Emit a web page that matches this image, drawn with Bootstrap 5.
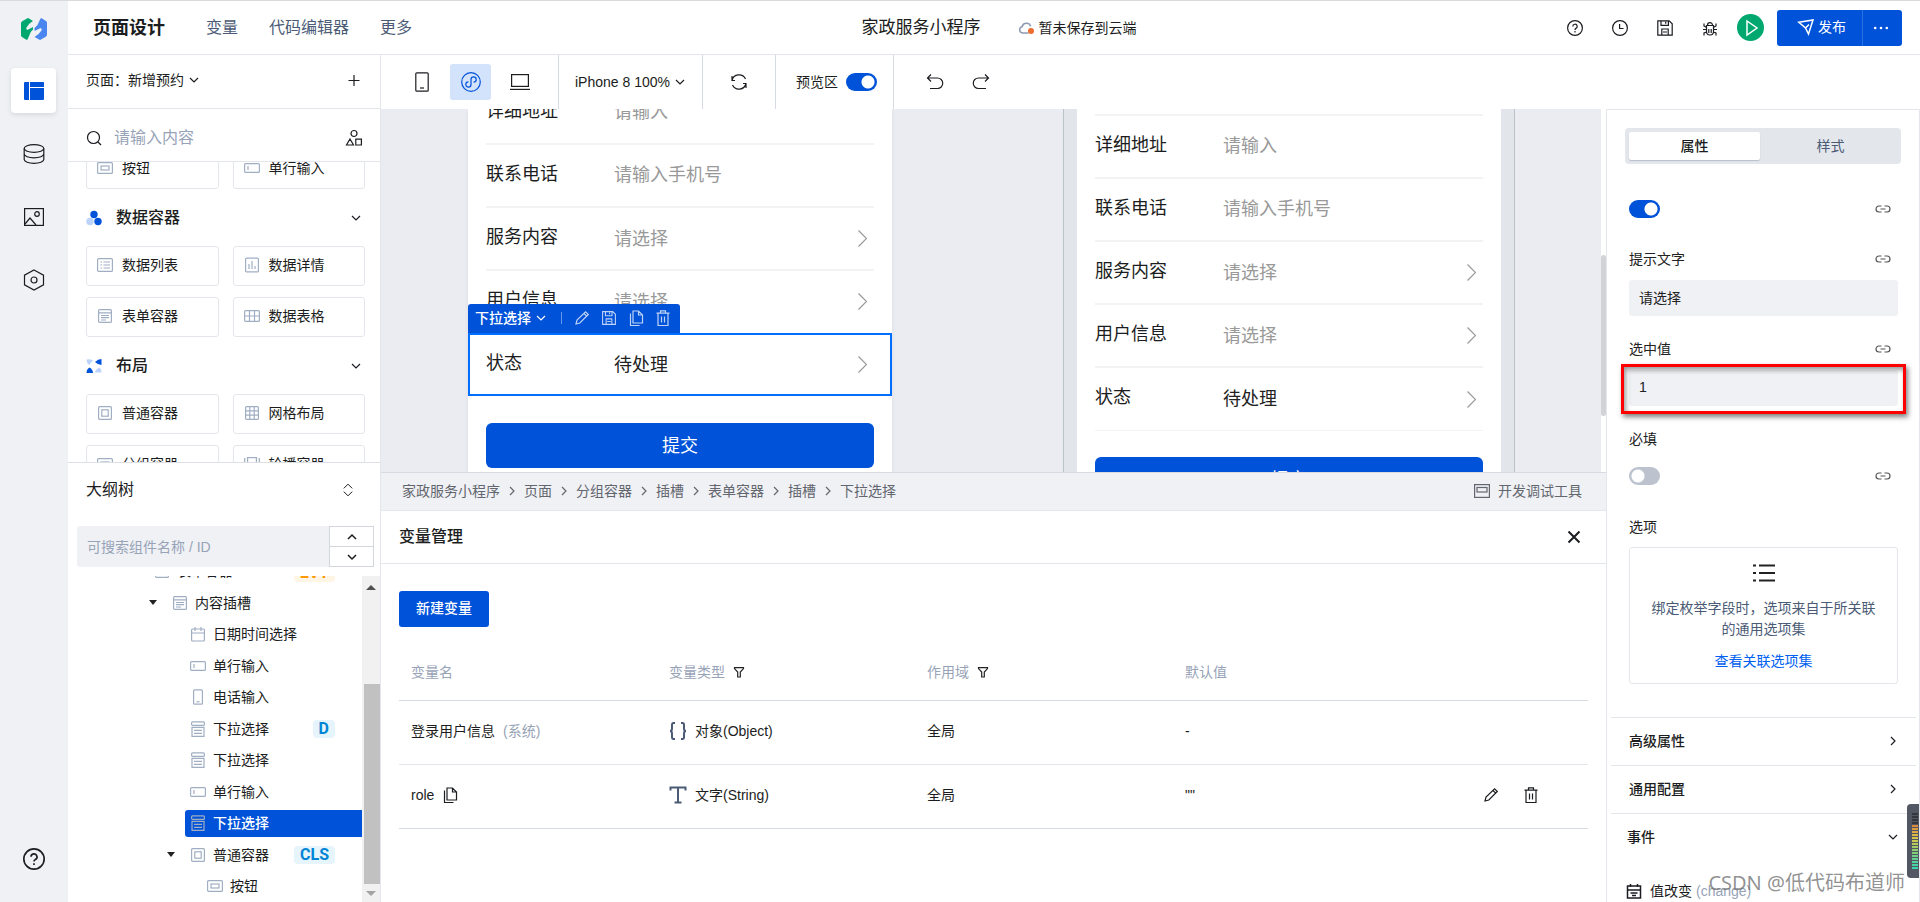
<!DOCTYPE html>
<html lang="zh-CN">
<head>
<meta charset="utf-8">
<meta name="viewport" content="width=device-width, initial-scale=1">
<title>页面设计 - 家政服务小程序</title>
<link href="https://cdn.jsdelivr.net/npm/bootstrap@5.3.0/dist/css/bootstrap.min.css" rel="stylesheet">
<style>
:root{--ink:#1b1d21;--slate:#4b5b76;--mute:#97a3b7;--line:#e3e6eb;--fill:#f0f1f5;--brand:#0052d9}
body{font-family:"Liberation Sans","Noto Sans CJK SC",sans-serif;font-size:14px;line-height:20px;color:var(--ink);background:#fff}
svg{display:block;flex:none;fill:none;stroke:currentColor;stroke-width:1.2;overflow:visible}
svg.w15{stroke-width:1.5}svg.w2{stroke-width:2}svg.w3{stroke-width:2.6}svg.solid{stroke:none}
a{color:inherit;text-decoration:none}
.bare{border:0;background:none;padding:0;color:inherit;display:flex;align-items:center;justify-content:center;line-height:20px}
.i12{width:12px;height:12px}.i16{width:16px;height:16px}.i18{width:18px;height:18px}.i22{width:22px;height:22px}
.shell{border-top:1px solid #d9dadc}
/* rail */
.rail{width:68px;padding-right:1px;background:var(--fill);flex:none}
.rail .logo{margin:17px 0 28px}
.rail-btn{width:45px;height:45px;border-radius:4px;margin-bottom:18px}
.rail-btn.active{background:#fff;color:var(--brand);box-shadow:0 2px 5px rgba(0,0,0,.1)}
.rail .help{margin-bottom:32px}
/* header */
.topbar{height:54px;border-bottom:1px solid var(--line);flex:none;padding:0 18px 0 25px}
.topbar h1{font-size:18px;line-height:24px;font-weight:700;margin:0}
.topbar nav{gap:31px;margin-left:41px;font-size:16px;color:var(--slate)}
.app-box{padding-left:20px}
.app-name{font-size:17px;margin-right:37px}
.tools{gap:27px}
.play{width:27px;height:27px;border-radius:50%;background:#00a870;color:#fff;margin:0 13px 0 18px}
.publish .btn{background:var(--brand);color:#fff;border:0;border-radius:3px;height:36px;font-size:14px;line-height:20px;padding:0 17px 2px 21px}
.publish .btn+.btn{border-left:1px solid #2d71e0;padding:0 13px 0 10px}
/* left column */
.side{width:313px;flex:none;border-right:1px solid var(--line)}
.side-row{border-bottom:1px solid var(--line);flex:none;padding:0 18px}
.page-row{height:54px;padding-bottom:3px}
.find-row{height:53px;padding-top:5px}
.find-row input{font-size:16px;border:0;outline:0;padding:0;min-width:0}
input::placeholder{color:var(--mute);opacity:1}
.palette{padding:0 15px 0 18px}
.palette .from-scroll{margin-top:-13px}
.tiles{display:grid;grid-template-columns:1fr 1fr;gap:11px 14px}
.tile{height:40px;border:1px solid var(--line);border-radius:3px;padding:0 10px 2px;gap:9px}
.tile svg,.node svg{color:#a0aec3}
.sect{height:57px;padding-right:3px}
.sect h2{font-size:16px;line-height:24px;font-weight:500;margin:0 auto 0 14px}
.outline{flex:0 0 440px;min-height:0;border-top:1px solid #dcdfe4;background:#fff}
.outline-head{height:54px;flex:none;padding:0 27px 0 18px;font-size:16px}
.outline-find{margin:9px 6px 9px 9px;height:41px;flex:none}
.outline-find input{background:var(--fill);border:0;border-radius:3px 0 0 3px;padding:0 10px;min-width:0;font-size:14px}
.stepper{width:45px}
.stepper button{border:1px solid #d3d6db;flex:1}
.stepper button+button{border-top:0}
.nodes{list-style:none;margin:0;padding:0}
.node{height:32px;flex:none}
.node:nth-child(even){height:31px}
.node .inner{height:27px;flex:1;gap:7px;padding:0 27px 0 5px;border-radius:3px 0 0 3px}
.node .inner>.tag{margin-left:auto}
.node.picked .inner{background:var(--brand);color:#fff;font-weight:500}
.node.lv0 .inner{margin-left:81px}.node.lv1 .inner{margin-left:99px}.node.lv2 .inner{margin-left:117px}.node.lv3 .inner{margin-left:134px}
.node.open .inner{position:relative}
.node.open .inner::before{content:"";position:absolute;left:-18px;top:11px;border:4px solid transparent;border-top:5px solid #222;border-bottom:0}
.tag{font:700 16px/18px Roboto,"Liberation Sans",sans-serif;color:#0084d6;background:#e6f4fb;border-radius:4px;padding:0 6px}
.tag.evt{color:#ff9800;background:#fff5e5;padding-top:4px}
.sbar{width:18px;background:#f1f1f1;flex:none}
.sbar .arrow{border:5px solid transparent;margin:0 4px}
.sbar .up{border-bottom:5px solid #505050;border-top:0;margin-top:9px}
.sbar .down{border-top:5px solid #a3a3a3;border-bottom:0;margin-bottom:6px}
.sbar .thumb{background:#c1c1c1;height:200px;margin:auto 0 7px 2px}
/* work area */
.bar{height:54px;flex:none}
.bar>div{border-right:1px solid #d6dae3;height:54px}
.bar>div:last-child{border:0}
.devs{padding:0 18px 0 20px}
.dev{width:41px;height:36px;border-radius:3px}
.dev.active{background:#d3e3fc;color:var(--brand)}
.form-switch .form-check-input.sw{width:31px;height:18px;margin:0;border:0;box-shadow:none;background-color:#bcc3cf;background-image:radial-gradient(circle at 9px 9px,#fff 6px,transparent 7px);background-size:100% 100%;background-position:0 0}
.form-switch .form-check-input.sw:checked{background-color:var(--brand);background-image:radial-gradient(circle at 22px 9px,#fff 6px,transparent 7px)}
.form-switch.plain{padding:0;margin:0;min-height:0}
.stage{background:#ebecf1;gap:172px}
.phone{background:#fff;padding:0 18px;width:424px;flex:none;font-size:18px}
.framed{border:solid #e2e6ea;border-width:0 13px;outline:1px solid #bcc2ca;width:450px}
.from-scroll-a{margin-top:-27px}
.gap-head{height:7px;border-bottom:2px solid #f3f3f4}
.field{height:63px;border-bottom:2px solid #f3f3f4;position:relative}
.field label{width:128px;padding-bottom:4px;line-height:24px}
.field input,.field select{border:0;outline:0;padding:0;background:none;appearance:none;color:#222;min-width:0;line-height:24px;height:40px}
.field input::placeholder{color:#999}
.field select.blank{color:#999}
.field .go{color:#999;width:9px;height:17px;margin-right:7px}
.field.last{border-bottom-width:1px}
.field.nolines{border-color:transparent}
.sel-box{position:absolute;inset:-1px -18px;border:2px solid #006eff;pointer-events:none}
.sel-tools{position:absolute;left:-18px;bottom:62px;height:29px;gap:11px;background:var(--brand);color:#fff;border-radius:3px 3px 0 0;font-size:14px;padding:0 9px 2px 7px;z-index:2}
.sel-tools svg{opacity:.75}
.sel-tools .bare svg{width:16px;height:16px}
.sel-tools .bare svg.i12{width:12px;height:12px;opacity:1}
.sel-tools strong{font-weight:500}
.sel-tools .rule{width:1px;height:12px;background:#fff;opacity:.4;margin:0 1px 0 3px}
.submit{background:var(--brand);color:#fff;border:0;border-radius:6px;width:100%;height:45px;font-size:18px;margin-top:26px}
.vtrack{width:5px;flex:none;background:#fff}
.vtrack i{display:block;height:161px;margin-top:146px;background:#d2d3d5;border-radius:3px}
.dock{flex:0 0 430px;border-top:1px solid #d6dae3}
.crumbs{height:38px;background:var(--fill);border-bottom:1px solid var(--line);padding:0 24px 2px 21px;color:#62666e}
.crumbs ol{list-style:none;margin:0;padding:0;gap:8px}
.dock-head{height:53px;border-bottom:1px solid var(--line);padding:0 24px 0 18px}
.dock-head h2{font-size:16px;line-height:24px;font-weight:500;margin:0}
.dock-body{padding:27px 18px 0}
.new-var{background:var(--brand);color:#fff;border:0;border-radius:3px;height:36px;padding:0 17px 2px;font-size:14px;line-height:20px;font-weight:500}
.vars{width:100%;table-layout:fixed;border-collapse:collapse}
.vars th{font-weight:400;color:var(--mute);height:73px;padding:18px 12px 0;border-bottom:1px solid #d6dae3}
.vars th svg{color:#222}
.vars td{height:64px;padding:0 12px 2px;border-bottom:1px solid var(--line)}
.vars tr:last-child td{border-color:#d6dae3}
.vars .kind{color:var(--slate)}
.c-main{width:21.7%}
/* property panel */
.props{width:314px;flex:none;border:1px solid var(--line);border-bottom:0;position:relative}
.seg{margin:18px 18px 0;height:36px;background:var(--line);border-radius:4px;padding:4px 0 4px 4px;color:var(--slate)}
.seg button{flex:1;border-radius:2px}
.seg .on{flex:0 0 131px;background:#fff;color:var(--ink);font-weight:500;box-shadow:0 1px 1px #b9bfc9}
.form-part{padding:0 21px 0 22px}
.prow{height:20px;padding-right:7px;color:#222}
.prow svg{color:#555}
.pin{width:100%;height:36px;border:0;background:var(--fill);border-radius:3px;padding:0 10px 2px;font-size:14px;margin:11px 0 23px;display:block;color:#222}
.ring{position:relative}
.ring::after{content:"";position:absolute;inset:-6px -8px -8px;border:3px solid #f00;box-shadow:2px 3px 5px rgba(0,0,0,.5),inset 2px 3px 5px rgba(0,0,0,.4);pointer-events:none}
.enum{margin-top:10px;border:1px solid var(--line);border-radius:3px;height:137px;padding:16px 20px 0;text-align:center;color:var(--slate);line-height:21px}
.enum a{color:#0060f0}
.fold{border-top:1px solid var(--line);height:48px;margin:0 3px 0 4px;font-weight:500}
.fold button{width:100%;justify-content:space-between;height:47px;font-weight:500;padding:0 17px 2px 18px}
.wmark{position:absolute;right:14px;bottom:6px;font-family:"Noto Sans","Noto Sans CJK SC",sans-serif;font-size:20px;line-height:26px;color:rgba(110,110,110,.75);white-space:nowrap}
.meter-box{position:absolute;right:-1px;bottom:24px;width:13px;height:74px;background:#535763;border-radius:4px 0 0 4px;padding:9px 2px 8px 5px}
.meter-bar{height:100%;background:repeating-linear-gradient(transparent 0 2px,#535763 2px 3px),linear-gradient(#33363d 0 20%,#e08a3c 22%,#d9c84a 45%,#7fce7a 70%,#2fd6b8)}
</style>
</head>
<body>
<svg width="0" height="0" class="position-absolute" aria-hidden="true">
  <symbol id="down" viewBox="0 0 12 12"><path d="M2 4l4 4 4-4"/></symbol>
  <symbol id="up" viewBox="0 0 12 12"><path d="M2 8l4-4 4 4"/></symbol>
  <symbol id="right" viewBox="0 0 12 12"><path d="M4 2l4 4-4 4"/></symbol>
  <symbol id="go" viewBox="0 0 9 17"><path d="M.5.5l8 8-8 8"/></symbol>
  <symbol id="help" viewBox="0 0 16 16"><circle cx="8" cy="8" r="7.4"/><path d="M5.800 6.400a2.200 2.200 0 1 1 3.200 2c-.8.4-1 .8-1 1.500M8 11v1.400"/></symbol>
  <symbol id="disk" viewBox="0 0 16 16"><path d="M.8.8h11.400l3 3v11.400H.8zM4 1v4.400h7.400V1M8.700 1.800v2M4.800 15V9h6.400v6M6 12h4"/></symbol>
  <symbol id="pen" viewBox="0 0 16 16"><path d="M2 14l1-4 8.600-8.200 2.700 2.700L5.800 13zM10 3.500l2.700 2.700"/></symbol>
  <symbol id="copy" viewBox="0 0 16 16"><path d="M5 1h5.500l4 4v8H5zM10.500 1v4h4M2.500 3.500v12h9"/></symbol>
  <symbol id="bin" viewBox="0 0 16 16"><path d="M1.500 3.200h13M3 3.500v12h10v-12M5.500 3V.8h5V3M6.500 6.500v6M9.500 6.500v6"/></symbol>
  <symbol id="btnico" viewBox="0 0 16 16"><rect x=".6" y="2.600" width="14.800" height="10.800" rx="1"/><rect x="4" y="6" width="8" height="4"/></symbol>
  <symbol id="line" viewBox="0 0 16 16"><rect x=".6" y="3.600" width="14.800" height="8.800" rx="1"/><path d="M4 6v4"/></symbol>
  <symbol id="list" viewBox="0 0 16 16"><rect x=".6" y="1.600" width="14.800" height="12.800" rx="1"/><path d="M3.500 5h1.500M6.500 5H13M3.500 8h1.500M6.500 8H13M3.500 11h1.500M6.500 11H13"/></symbol>
  <symbol id="chart" viewBox="0 0 16 16"><rect x="1.600" y="1.100" width="12.800" height="13.800" rx="1"/><path d="M5 7v5M8 4v8M11 9v3"/></symbol>
  <symbol id="form" viewBox="0 0 16 16"><rect x="1.600" y="1.600" width="12.800" height="12.800" rx="1"/><path d="M2 4.800h12M4 7.500h8M4 9.700h8M4 12h5"/></symbol>
  <symbol id="table" viewBox="0 0 16 16"><rect x=".6" y="2.600" width="14.800" height="10.800" rx="1"/><path d="M1 8h14M5.500 3v10M10.500 3v10"/></symbol>
  <symbol id="box" viewBox="0 0 16 16"><rect x="1.600" y="1.600" width="12.800" height="12.800" rx="1"/><rect x="4.800" y="4.800" width="6.400" height="6.400"/></symbol>
  <symbol id="grid" viewBox="0 0 16 16"><rect x="1.600" y="1.600" width="12.800" height="12.800" rx="1"/><path d="M2 5.800h12M2 10.200h12M5.800 2v12M10.200 2v12"/></symbol>
  <symbol id="swipe" viewBox="0 0 16 16"><rect x="3.600" y="1.600" width="8.800" height="11.800"/><path d="M.7 2v11M15.300 2v11"/></symbol>
  <symbol id="cal" viewBox="0 0 16 16"><rect x="1.600" y="3" width="12.800" height="12" rx="1"/><path d="M2 7h12M5 1v4M11 1v4"/></symbol>
  <symbol id="tel" viewBox="0 0 16 16"><rect x="3.600" y=".8" width="8.800" height="14.400" rx="1"/><path d="M6.500 12.800h3"/></symbol>
  <symbol id="drop" viewBox="0 0 16 16"><rect x="1.600" y=".8" width="12.800" height="3.600" rx="1"/><path d="M2 6.400h12v9H2zM4 9.300h8M4 12.300h8"/></symbol>
  <symbol id="link" viewBox="0 0 16 16"><path d="M6.500 5H4a3 3 0 0 0 0 6h2.500M9.500 5H12a3 3 0 0 1 0 6H9.500M5.500 8h5"/></symbol>
  <symbol id="funnel" viewBox="0 0 12 12"><path d="M1.500 1.600h9v1L7.300 6v5H4.700V6L1.500 2.600z"/></symbol>
</svg>

<div class="shell d-flex vh-100 overflow-hidden">
  <aside class="rail d-flex flex-column align-items-center">
    <a href="#" class="logo" aria-label="首页">
      <svg class="solid" width="26" height="22" viewBox="0 0 26 22"><path fill="#00a870" d="M0 5.500Q0 4 1.200 3.300L6 .4Q7-.2 8 .4L12 3 8.500 5.500 5.500 9.500Q4.600 11 6.300 12L12 9v2.500L9.800 14 6.500 21.500Q6 22 5.300 21.700L1 19Q0 18.300 0 17z"/><path fill="#4a86f0" d="M26 16.500q0 1.500-1.200 2.200L20 21.600q-1 .6-2 0L13.500 19l4-3 3-3.500Q21.400 11 19.700 10L13.500 13v-3l3-3L19.500.5Q20 0 20.700.3L25 3q1 .7 1 2z"/></svg>
    </a>
    <button class="bare rail-btn active" aria-label="页面"><svg class="solid" width="20" height="18" viewBox="0 0 20 18"><path fill="#0052d9" d="M0 1q0-1 1-1h4v18H1q-1 0-1-1zM6 0h13q1 0 1 1v4H6zM6 6h14v11q0 1-1 1H6z"/></svg></button>
    <button class="bare rail-btn" aria-label="数据"><svg class="i22" viewBox="0 0 22 22"><ellipse cx="11" cy="5.500" rx="9.800" ry="3.800"/><path d="M1.200 5.500v11c0 2.100 4.400 3.800 9.800 3.800s9.800-1.700 9.800-3.800v-11M1.200 11c0 2.100 4.400 3.800 9.800 3.800s9.800-1.700 9.800-3.800"/></svg></button>
    <button class="bare rail-btn" aria-label="素材"><svg class="i22" viewBox="0 0 22 22"><rect x="1.600" y="2.600" width="18.800" height="16.800"/><path d="M2 18l5-6 6 7"/><circle cx="14" cy="8" r="2.300"/></svg></button>
    <button class="bare rail-btn" aria-label="设置"><svg class="i22" viewBox="0 0 22 22"><path d="M11 1l9.500 5.200v9.600L11 21l-9.500-5.200V6.200z"/><circle cx="11" cy="11" r="3"/></svg></button>
    <button class="bare help mt-auto" aria-label="帮助"><svg class="i22"><use href="#help"/></svg></button>
  </aside>

  <div class="d-flex flex-column flex-grow-1 overflow-hidden">
    <header class="topbar d-flex align-items-center">
      <h1>页面设计</h1>
      <nav class="d-flex me-auto"><a href="#">变量</a><a href="#">代码编辑器</a><a href="#">更多</a></nav>
      <div class="app-box d-flex align-items-center me-auto">
        <span class="app-name">家政服务小程序</span>
        <svg class="w15 me-1" width="17" height="14" viewBox="0 0 16 14" color="#8d9ab2"><path d="M10 12H4a3.200 3.200 0 0 1-.4-6.300 4.500 4.500 0 0 1 8.600-.4"/><circle cx="12.500" cy="10" r="3" fill="#ed6c2f" stroke="none"/></svg>
        <span>暂未保存到云端</span>
      </div>
      <div class="tools d-flex align-items-center">
        <button class="bare" aria-label="帮助"><svg class="i18" viewBox="-1 -1 18 18"><use href="#help" width="16" height="16"/></svg></button>
        <button class="bare" aria-label="历史"><svg class="i18" viewBox="-1 -1 18 18"><circle cx="8" cy="8" r="7.400"/><path d="M7.600 4v4.500h3.900"/></svg></button>
        <button class="bare" aria-label="保存"><svg class="i18" viewBox="-1 -1 18 18"><use href="#disk" width="16" height="16"/></svg></button>
        <button class="bare" aria-label="调试"><svg class="i18" viewBox="-1 -1 18 18"><path d="M4.500 5.500h7v6a3.500 3.500 0 0 1-7 0zM5.500 5.200a2.500 2.500 0 0 1 5 0M6.800 9v4M9.200 9v4M4.500 7.500L2 6V3.500M11.500 7.500L14 6V3.500M1 9.500h3.500M11.500 9.500H15M4.800 12L2 13v2.500M11.200 12l2.800 1v2.500"/></svg></button>
      </div>
      <button class="bare play" aria-label="预览"><svg class="w15 ms-1" width="14" height="18" viewBox="0 0 14 18"><path d="M2 2l10 7-10 7z"/></svg></button>
      <div class="publish btn-group">
        <button class="btn d-flex align-items-center gap-1"><svg class="i16 w15" viewBox="0 0 16 16"><path d="M.8 3.200L15 1l-4.500 14-3-6zM7.500 9L11 5.500"/></svg>发布</button>
        <button class="btn d-flex align-items-center" aria-label="更多操作"><svg class="i16 solid" viewBox="0 0 16 16"><g fill="#fff"><circle cx="2.200" cy="8" r="1.300"/><circle cx="8" cy="8" r="1.300"/><circle cx="13.800" cy="8" r="1.300"/></g></svg></button>
      </div>
    </header>

    <div class="d-flex flex-grow-1 overflow-hidden">
      <aside class="side d-flex flex-column">
        <div class="side-row page-row d-flex align-items-center">
          <button class="bare gap-1">页面：新增预约<svg class="i12"><use href="#down"/></svg></button>
          <button class="bare ms-auto" aria-label="新增页面"><svg class="i16" viewBox="0 0 16 16"><path d="M8 3v11M2.500 8.500h11"/></svg></button>
        </div>
        <div class="side-row find-row d-flex align-items-center">
          <svg class="i16" viewBox="0 0 16 16"><circle cx="7.500" cy="7.500" r="6"/><path d="M12 12l3 3"/></svg>
          <input class="flex-grow-1 ms-2 ps-1" placeholder="请输入内容" aria-label="搜索组件">
          <button class="bare" aria-label="分类"><svg class="i16" viewBox="0 0 16 16"><circle cx="8" cy="3.500" r="3"/><path d="M4 9l3.500 6H.5zM9.800 9.200h5.600V15H9.800z"/></svg></button>
        </div>
        <div class="palette flex-grow-1 overflow-hidden">
          <div class="from-scroll">
            <div class="tiles">
              <button class="bare tile justify-content-start"><svg class="i16"><use href="#btnico"/></svg>按钮</button>
              <button class="bare tile justify-content-start"><svg class="i16"><use href="#line"/></svg>单行输入</button>
            </div>
            <div class="sect d-flex align-items-center">
              <svg class="i16 solid" viewBox="0 0 16 16"><circle cx="8" cy="4.500" r="3.700" fill="#0052d9"/><circle cx="4" cy="11.500" r="3.700" fill="#bcd3fb"/><circle cx="12" cy="11.500" r="3.700" fill="#0052d9"/></svg>
              <h2>数据容器</h2><svg class="i12"><use href="#down"/></svg>
            </div>
            <div class="tiles">
              <button class="bare tile justify-content-start"><svg class="i16"><use href="#list"/></svg>数据列表</button>
              <button class="bare tile justify-content-start"><svg class="i16"><use href="#chart"/></svg>数据详情</button>
              <button class="bare tile justify-content-start"><svg class="i16"><use href="#form"/></svg>表单容器</button>
              <button class="bare tile justify-content-start"><svg class="i16"><use href="#table"/></svg>数据表格</button>
            </div>
            <div class="sect d-flex align-items-center">
              <svg class="i16 solid" viewBox="0 0 16 16"><path fill="#bcd3fb" d="M.5 1.500Q4 .5 7 2.500L3 7Q.5 5 .5 1.500zM15.500 14.500H9q1-3.500 4-5 2.500 1 2.500 5z"/><path fill="#0052d9" d="M15.500 1v6q-4-.5-6.500-3 3-3 6.500-3zM.5 15q0-4 3-5.500Q7 11.500 7 15z"/></svg>
              <h2>布局</h2><svg class="i12"><use href="#down"/></svg>
            </div>
            <div class="tiles">
              <button class="bare tile justify-content-start"><svg class="i16"><use href="#box"/></svg>普通容器</button>
              <button class="bare tile justify-content-start"><svg class="i16"><use href="#grid"/></svg>网格布局</button>
              <button class="bare tile justify-content-start"><svg class="i16"><use href="#btnico"/></svg>分组容器</button>
              <button class="bare tile justify-content-start"><svg class="i16"><use href="#swipe"/></svg>轮播容器</button>
            </div>
          </div>
        </div>
        <section class="outline d-flex flex-column overflow-hidden">
          <div class="outline-head d-flex align-items-center justify-content-between">大纲树
            <button class="bare" aria-label="展开"><svg width="10" height="14" viewBox="0 0 12 16"><path d="M1 6l5-5 5 5M1 10l5 5 5-5"/></svg></button>
          </div>
          <div class="outline-find d-flex">
            <input class="flex-grow-1" placeholder="可搜索组件名称 / ID" aria-label="搜索组件名称">
            <div class="stepper d-flex flex-column">
              <button class="bare" aria-label="上一个"><svg class="i12 w15"><use href="#up"/></svg></button>
              <button class="bare" aria-label="下一个"><svg class="i12 w15"><use href="#down"/></svg></button>
            </div>
          </div>
          <div class="d-flex flex-grow-1 overflow-hidden">
            <ul class="nodes d-flex flex-column justify-content-end flex-grow-1 overflow-hidden">
              <li class="node lv0 d-flex align-items-center"><div class="inner d-flex align-items-center"><svg class="i16"><use href="#form"/></svg>表单容器<span class="tag evt">EVT</span></div></li>
              <li class="node lv1 open d-flex align-items-center"><div class="inner d-flex align-items-center"><svg class="i16"><use href="#form"/></svg>内容插槽</div></li>
              <li class="node lv2 d-flex align-items-center"><div class="inner d-flex align-items-center"><svg class="i16"><use href="#cal"/></svg>日期时间选择</div></li>
              <li class="node lv2 d-flex align-items-center"><div class="inner d-flex align-items-center"><svg class="i16"><use href="#line"/></svg>单行输入</div></li>
              <li class="node lv2 d-flex align-items-center"><div class="inner d-flex align-items-center"><svg class="i16"><use href="#tel"/></svg>电话输入</div></li>
              <li class="node lv2 d-flex align-items-center"><div class="inner d-flex align-items-center"><svg class="i16"><use href="#drop"/></svg>下拉选择<span class="tag">D</span></div></li>
              <li class="node lv2 d-flex align-items-center"><div class="inner d-flex align-items-center"><svg class="i16"><use href="#drop"/></svg>下拉选择</div></li>
              <li class="node lv2 d-flex align-items-center"><div class="inner d-flex align-items-center"><svg class="i16"><use href="#line"/></svg>单行输入</div></li>
              <li class="node lv2 picked d-flex align-items-center"><div class="inner d-flex align-items-center"><svg class="i16"><use href="#drop"/></svg>下拉选择</div></li>
              <li class="node lv2 open d-flex align-items-center"><div class="inner d-flex align-items-center"><svg class="i16"><use href="#box"/></svg>普通容器<span class="tag">CLS</span></div></li>
              <li class="node lv3 d-flex align-items-center"><div class="inner d-flex align-items-center"><svg class="i16"><use href="#btnico"/></svg>按钮</div></li>
            </ul>
            <div class="sbar d-flex flex-column"><i class="arrow up"></i><i class="thumb"></i><i class="arrow down"></i></div>
          </div>
        </section>
      </aside>

      <div class="d-flex flex-column flex-grow-1 overflow-hidden">
        <div class="bar d-flex">
          <div class="devs d-flex align-items-center gap-2">
            <button class="bare dev" aria-label="手机"><svg width="14" height="20" viewBox="0 0 14 20"><rect x=".8" y=".8" width="12.400" height="18.400" rx="1"/><path d="M5 16h4"/></svg></button>
            <button class="bare dev active" aria-label="小程序"><svg width="20" height="20" viewBox="0 0 20 20"><circle cx="10" cy="10" r="9.300"/><path d="M10 12.500A2.600 2.600 0 1 1 7.400 9.900M10 12.500v-5a2.600 2.600 0 1 1 2.600 2.600"/></svg></button>
            <button class="bare dev" aria-label="电脑"><svg width="20" height="16" viewBox="0 0 20 16"><rect x="1.600" y=".6" width="16.800" height="11.800"/><path d="M0 15.400h20"/></svg></button>
          </div>
          <div class="d-flex align-items-center px-3"><button class="bare">iPhone 8 100%<svg class="i12 ms-1"><use href="#down"/></svg></button></div>
          <div class="d-flex align-items-center px-4"><button class="bare mx-1" aria-label="刷新"><svg class="i16" viewBox="0 0 16 16"><path d="M1 6.500A7.200 7.200 0 0 1 14.500 5M15 9.500A7.200 7.200 0 0 1 1.500 11M1 2v4.500h3M15 14V9.500h-3"/></svg></button></div>
          <div class="d-flex align-items-center px-3 gap-2"><label for="pv" class="ps-1">预览区</label><div class="form-switch plain"><input class="form-check-input sw d-block float-none" type="checkbox" role="switch" id="pv" checked></div></div>
          <div class="d-flex align-items-center gap-4 ps-4 ms-2">
            <button class="bare pe-1" aria-label="撤销"><svg class="i18" viewBox="0 0 18 18"><path d="M5 1.500L1.500 5 5 8.500M1.500 5h10a4.700 4.700 0 0 1 0 10.500H4"/></svg></button>
            <button class="bare" aria-label="重做"><svg class="i18" viewBox="0 0 18 18"><path d="M13 1.500L16.500 5 13 8.500M16.500 5h-10a4.700 4.700 0 0 0 0 10.500H14"/></svg></button>
          </div>
        </div>

        <div class="d-flex flex-grow-1 overflow-hidden">
          <main class="d-flex flex-column flex-grow-1 overflow-hidden">
            <div class="d-flex flex-grow-1 overflow-hidden">
              <div class="stage d-flex flex-grow-1 justify-content-center overflow-hidden">
                <div class="phone shadow-sm"><div class="from-scroll-a">
                  <div class="field d-flex align-items-center"><label for="a1">详细地址</label><input id="a1" class="flex-grow-1" placeholder="请输入"></div>
                  <div class="field d-flex align-items-center"><label for="a2">联系电话</label><input id="a2" class="flex-grow-1" placeholder="请输入手机号"></div>
                  <div class="field d-flex align-items-center"><label for="a3">服务内容</label><select id="a3" class="flex-grow-1 blank"><option>请选择</option></select><svg class="go"><use href="#go"/></svg></div>
                  <div class="field nolines d-flex align-items-center"><label for="a4">用户信息</label><select id="a4" class="flex-grow-1 blank"><option>请选择</option></select><svg class="go"><use href="#go"/></svg></div>
                  <div class="field nolines d-flex align-items-center"><label for="a5">状态</label><select id="a5" class="flex-grow-1"><option>待处理</option></select><svg class="go"><use href="#go"/></svg>
                    <div class="sel-box"></div>
                    <div class="sel-tools d-flex align-items-center"><button class="bare gap-1"><strong>下拉选择</strong><svg class="i12"><use href="#down"/></svg></button><span class="rule"></span>
                      <button class="bare" aria-label="编辑"><svg><use href="#pen"/></svg></button>
                      <button class="bare" aria-label="保存"><svg viewBox="-1 -1 18 18"><use href="#disk" width="16" height="16"/></svg></button>
                      <button class="bare" aria-label="复制"><svg><use href="#copy"/></svg></button>
                      <button class="bare" aria-label="删除"><svg><use href="#bin"/></svg></button></div>
                  </div>
                  <button class="submit">提交</button>
                </div></div>
                <div class="phone framed">
                  <div class="gap-head"></div>
                  <div class="field d-flex align-items-center"><label for="b1">详细地址</label><input id="b1" class="flex-grow-1" placeholder="请输入"></div>
                  <div class="field d-flex align-items-center"><label for="b2">联系电话</label><input id="b2" class="flex-grow-1" placeholder="请输入手机号"></div>
                  <div class="field d-flex align-items-center"><label for="b3">服务内容</label><select id="b3" class="flex-grow-1 blank"><option>请选择</option></select><svg class="go"><use href="#go"/></svg></div>
                  <div class="field d-flex align-items-center"><label for="b4">用户信息</label><select id="b4" class="flex-grow-1 blank"><option>请选择</option></select><svg class="go"><use href="#go"/></svg></div>
                  <div class="field last d-flex align-items-center"><label for="b5">状态</label><select id="b5" class="flex-grow-1"><option>待处理</option></select><svg class="go"><use href="#go"/></svg></div>
                  <button class="submit">提交</button>
                </div>
              </div>
              <div class="vtrack"><i></i></div>
            </div>

            <section class="dock">
              <div class="crumbs d-flex align-items-center justify-content-between">
                <ol class="d-flex align-items-center">
                  <li><a href="#">家政服务小程序</a></li><li><svg width="8" height="12" viewBox="2 0 8 12"><path d="M4 2l4 4-4 4"/></svg></li>
                  <li><a href="#">页面</a></li><li><svg width="8" height="12" viewBox="2 0 8 12"><path d="M4 2l4 4-4 4"/></svg></li>
                  <li><a href="#">分组容器</a></li><li><svg width="8" height="12" viewBox="2 0 8 12"><path d="M4 2l4 4-4 4"/></svg></li>
                  <li><a href="#">插槽</a></li><li><svg width="8" height="12" viewBox="2 0 8 12"><path d="M4 2l4 4-4 4"/></svg></li>
                  <li><a href="#">表单容器</a></li><li><svg width="8" height="12" viewBox="2 0 8 12"><path d="M4 2l4 4-4 4"/></svg></li>
                  <li><a href="#">插槽</a></li><li><svg width="8" height="12" viewBox="2 0 8 12"><path d="M4 2l4 4-4 4"/></svg></li>
                  <li><a href="#">下拉选择</a></li>
                </ol>
                <button class="bare gap-2"><svg class="i16" viewBox="0 0 16 16"><rect x=".6" y="1.600" width="14.800" height="12.800"/><rect x="3" y="4.500" width="10" height="4.500"/></svg>开发调试工具</button>
              </div>
              <div class="dock-head d-flex align-items-center justify-content-between"><h2>变量管理</h2><button class="bare" aria-label="关闭"><svg class="i16 w2" viewBox="0 0 16 16"><path d="M2.500 2.500l11 11M13.500 2.500l-11 11"/></svg></button></div>
              <div class="dock-body">
                <button class="new-var">新建变量</button>
                <table class="vars">
                  <colgroup><col class="c-main"><col class="c-main"><col class="c-main"><col class="c-main"><col></colgroup>
                  <thead><tr><th>变量名</th><th><span class="d-flex align-items-center gap-2">变量类型<svg class="i12"><use href="#funnel"/></svg></span></th><th><span class="d-flex align-items-center gap-2">作用域<svg class="i12"><use href="#funnel"/></svg></span></th><th>默认值</th><th></th></tr></thead>
                  <tbody>
                    <tr><td>登录用户信息<span class="ms-2" style="color:var(--mute)">(系统)</span></td><td><span class="d-flex align-items-center"><svg class="kind i18 w2 me-2" viewBox="0 0 18 18"><path d="M6 1H4.500Q3 1 3 3v3.500Q3 9 1 9q2 0 2 2.500V15q0 2 1.500 2H6M12 1h1.500Q15 1 15 3v3.500Q15 9 17 9q-2 0-2 2.500V15q0 2-1.500 2H12"/></svg>对象(Object)</span></td><td>全局</td><td>-</td><td></td></tr>
                    <tr><td><span class="d-flex align-items-center gap-2">role<svg class="i16"><use href="#copy"/></svg></span></td><td><span class="d-flex align-items-center"><svg class="kind i18 w2 me-2" viewBox="0 0 18 18"><path d="M1.500 4.500V1.500h15v3M9 1.500v15M5.500 16.500h7"/></svg>文字(String)</span></td><td>全局</td><td>""</td><td><span class="d-flex gap-4 ps-4 ms-3"><button class="bare" aria-label="编辑"><svg class="i16"><use href="#pen"/></svg></button><button class="bare" aria-label="删除"><svg class="i16"><use href="#bin"/></svg></button></span></td></tr>
                  </tbody>
                </table>
              </div>
            </section>
          </main>

          <aside class="props overflow-hidden">
            <div class="seg d-flex"><button class="bare on">属性</button><button class="bare">样式</button></div>
            <div class="form-part">
              <div class="prow d-flex align-items-center justify-content-between" style="margin-top:35px"><div class="form-switch plain"><input class="form-check-input sw d-block float-none" type="checkbox" role="switch" checked aria-label="显示"></div><svg class="i16"><use href="#link"/></svg></div>
              <div class="prow d-flex align-items-center justify-content-between" style="margin-top:30px"><label for="p1">提示文字</label><svg class="i16"><use href="#link"/></svg></div>
              <input class="pin" id="p1" value="请选择">
              <div class="prow d-flex align-items-center justify-content-between"><label for="p2">选中值</label><svg class="i16"><use href="#link"/></svg></div>
              <div class="ring"><input class="pin" id="p2" value="1"></div>
              <div class="prow"><label for="p3">必填</label></div>
              <div class="prow d-flex align-items-center justify-content-between" style="margin-top:17px"><div class="form-switch plain"><input class="form-check-input sw d-block float-none" type="checkbox" role="switch" id="p3"></div><svg class="i16"><use href="#link"/></svg></div>
              <div class="prow" style="margin-top:31px">选项</div>
              <div class="enum">
                <svg class="w2 mx-auto" width="22" height="18" viewBox="0 0 22 18" color="#222"><path d="M0 1.500h3M6 1.500h16M0 9h3M6 9h16M0 16.500h3M6 16.500h16"/></svg>
                <div style="margin-top:16px">绑定枚举字段时，选项来自于所关联的通用选项集</div>
                <a href="#" class="d-block" style="margin-top:11px">查看关联选项集</a>
              </div>
            </div>
            <div class="fold" style="margin-top:33px"><button class="bare">高级属性<svg class="i12"><use href="#right"/></svg></button></div>
            <div class="fold"><button class="bare">通用配置<svg class="i12"><use href="#right"/></svg></button></div>
            <div class="fold"><button class="bare ps-3">事件<svg class="i12"><use href="#down"/></svg></button></div>
            <div class="d-flex align-items-center" style="margin:20px 0 0 19px"><svg class="i16 w15 me-2" viewBox="0 0 16 16"><path d="M1.500 3h13v12h-13zM2 7h12M4.500 1v3M11.500 1v3M4.500 10h7M6 12.500h4"/></svg><span>值改变</span><span class="ms-1" style="color:var(--mute)">(change)</span></div>
            <div class="wmark">CSDN @低代码布道师</div>
            <div class="meter-box"><div class="meter-bar"></div></div>
          </aside>
        </div>
      </div>
    </div>
  </div>
</div>
<script src="https://cdn.jsdelivr.net/npm/bootstrap@5.3.0/dist/js/bootstrap.bundle.min.js"></script>
</body>
</html>
